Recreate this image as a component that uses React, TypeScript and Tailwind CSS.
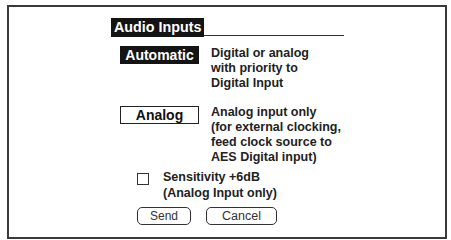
const font = { fontFamily: '"Liberation Sans", Arial, sans-serif' };

const Option = ({
  label,
  active,
  lines,
}: {
  label: string;
  active?: boolean;
  lines: string[];
}) => (
  <div className="flex items-start pl-[9px]">
    <div
      className={`w-[79px] h-[18px] flex items-center justify-center font-bold text-[14px] leading-none ${
        active ? 'bg-[#141414] text-white' : 'bg-white text-[#111] border border-[#222]'
      }`}
    >
      {label}
    </div>
    <div className="ml-[12px] -mt-[0.5px] text-[12.5px] font-bold leading-[15px] text-[#222]">
      {lines.map((l) => (
        <div key={l}>{l}</div>
      ))}
    </div>
  </div>
);

export default function App() {
  return (
    <div className="w-[451px] h-[240px] bg-white pt-[5px] pl-[7px]" style={font}>
      <div className="w-[440px] h-[234px] border-2 border-[#3a3a3a] pt-[11px] pl-[102px]">
        {/* Header */}
        <div className="flex items-end w-[233px]">
          <div className="h-[19px] px-[3px] bg-[#141414] text-white font-bold text-[14.3px] leading-[19px]">
            Audio Inputs
          </div>
          <div className="flex-1 h-px bg-[#333] mb-[1px]" />
        </div>

        <div className="mt-[9px] flex flex-col gap-[15px]">
          <Option
            label="Automatic"
            active
            lines={['Digital or analog', 'with priority to', 'Digital Input']}
          />
          <Option
            label="Analog"
            lines={[
              'Analog input only',
              '(for external clocking,',
              'feed clock source to',
              'AES Digital input)',
            ]}
          />
        </div>

        {/* Sensitivity */}
        <div className="mt-[4px] flex items-start pl-[26px]">
          <div className="mt-[4px] w-[12px] h-[12px] border-[1.5px] border-[#333] bg-white" />
          <div className="ml-[14px] text-[12.5px] font-bold leading-[16px] text-[#222]">
            <div>Sensitivity +6dB</div>
            <div>(Analog Input only)</div>
          </div>
        </div>

        {/* Buttons */}
        <div className="mt-[6px] flex gap-[15px] pl-[26px]">
          <button className="w-[54px] h-[18px] rounded-[5px] border border-[#333] bg-white text-[12px] leading-none text-[#333]">
            Send
          </button>
          <button className="w-[71px] h-[18px] rounded-[5px] border border-[#333] bg-white text-[12.5px] leading-none text-[#333]">
            Cancel
          </button>
        </div>
      </div>
    </div>
  );
}
